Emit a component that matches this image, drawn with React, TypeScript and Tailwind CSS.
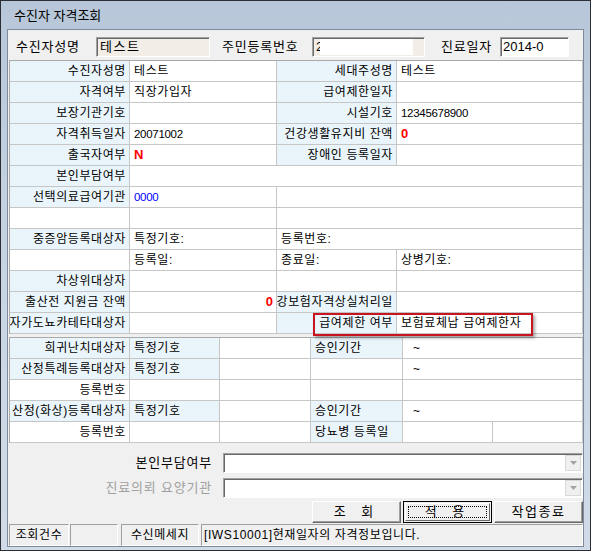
import type { ReactNode } from "react";

const font = "font-['Liberation_Sans','Noto_Sans_CJK_KR',sans-serif]";

function L({ children, span = "", white = false }: { children?: ReactNode; span?: string; white?: boolean }) {
  return (
    <div
      className={`h-[21px] border-r border-b border-[#c6c6c6] flex items-center justify-end overflow-hidden whitespace-nowrap pr-[3px] text-[12px] tracking-[0.6px] text-black ${white ? "bg-white" : "bg-[#eaf5fb]"} ${span}`}
    >
      <span className="shrink-0">{children}</span>
    </div>
  );
}

function V({ children, span = "", right = false, blue = false }: { children?: ReactNode; span?: string; right?: boolean; blue?: boolean }) {
  return (
    <div
      className={`h-[21px] border-r border-b border-[#c6c6c6] flex items-center overflow-hidden whitespace-nowrap text-[12px] tracking-[0.6px] text-black ${blue ? "bg-[#eaf5fb]" : "bg-white"} ${right ? "justify-end pr-[3px]" : "pl-[4px]"} ${span}`}
    >
      <span className="shrink-0">{children}</span>
    </div>
  );
}

const Red = ({ children }: { children: ReactNode }) => (
  <span className="text-[#ff0000] font-bold text-[13px] tracking-normal">{children}</span>
);

const Num = ({ children }: { children: ReactNode }) => (
  <span className="text-[11.5px] tracking-[-0.3px]">{children}</span>
);

function Combo() {
  return (
    <div className="w-[360px] h-[20px] bg-white border border-t-[#a0a0a0] border-l-[#a0a0a0] border-b-white border-r-white shadow-[inset_1px_1px_0_#696969] flex justify-end p-[1px]">
      <div className="w-[16px] h-full bg-[#f0f0f0] border border-[#d9d9d9] flex items-center justify-center">
        <svg width="7" height="4" viewBox="0 0 7 4">
          <path d="M0 0h7L3.5 4z" fill="#a3a3a3" />
        </svg>
      </div>
    </div>
  );
}

export default function App() {
  return (
    <div className={`w-[591px] h-[551px] bg-[#2b2e34] p-px flex ${font}`}>
      <div className="flex-1 flex flex-col bg-gradient-to-b from-[#b7c7d9] via-[#c8d5e3] to-[#d0dbe7] px-[6px] pb-[3px]">
        <div className="h-[28px] flex items-center pl-[7px] pt-px text-[13px] text-black">수진자 자격조회</div>
        <div className="flex-1 border border-[#7d8a9c] bg-[#f0f0f0] flex flex-col">
          {/* top row */}
          <div className="flex items-center h-[20px] mt-[7px] text-[13px] tracking-[0.8px] text-black">
            <span className="ml-[8px] w-[80px]">수진자성명</span>
            <div className="w-[114px] h-[20px] bg-[#f2ede6] border border-t-[#a0a0a0] border-l-[#a0a0a0] border-b-white border-r-white shadow-[inset_1px_1px_0_#696969] flex items-center pl-[3px] text-[13px] tracking-[1.5px]">
              테스트
            </div>
            <span className="ml-[12px] w-[90px]">주민등록번호</span>
            <div className="w-[113px] h-[20px] bg-[#f2ede6] border border-t-[#a0a0a0] border-l-[#a0a0a0] border-b-white border-r-white shadow-[inset_1px_1px_0_#696969] flex items-center pl-[3px] overflow-hidden">
              <span className="w-[4px] overflow-hidden">2</span>
              <div className="w-[93px] h-[16px] bg-white" />
            </div>
            <span className="ml-[16px] w-[59px]">진료일자</span>
            <div className="w-[69px] h-[20px] bg-white border border-t-[#a0a0a0] border-l-[#a0a0a0] border-b-white border-r-white shadow-[inset_1px_1px_0_#696969] flex items-center pl-[2px] overflow-hidden whitespace-nowrap text-[13px] tracking-normal">
              <span className="w-[58px] overflow-hidden shrink-0">2014-0</span>
            </div>
          </div>

          {/* table 1 */}
          <div className="relative ml-[1px] w-[574px] mt-[3px] border-l border-t border-[#a9a9a9] grid grid-cols-[120px_147px_120px_1fr]">
            <L>수진자성명</L>
            <V>테스트</V>
            <L>세대주성명</L>
            <V>테스트</V>

            <L>자격여부</L>
            <V>직장가입자</V>
            <L>급여제한일자</L>
            <V />

            <L>보장기관기호</L>
            <V />
            <L>시설기호</L>
            <V>
              <Num>12345678900</Num>
            </V>

            <L>자격취득일자</L>
            <V>
              <Num>20071002</Num>
            </V>
            <L>건강생활유지비 잔액</L>
            <V>
              <Red>0</Red>
            </V>

            <L>출국자여부</L>
            <V>
              <Red>N</Red>
            </V>
            <L>장애인 등록일자</L>
            <V />

            <L>본인부담여부</L>
            <V span="col-span-3" />

            <L>선택의료급여기관</L>
            <V>
              <span className="text-[#0000ff]">
                <Num>0000</Num>
              </span>
            </V>
            <V span="col-span-2" />

            <L white />
            <V />
            <V span="col-span-2" />

            <L>중증암등록대상자</L>
            <V>특정기호:</V>
            <V span="col-span-2">등록번호:</V>

            <L white />
            <V>등록일:</V>
            <V>종료일:</V>
            <V>상병기호:</V>

            <L>차상위대상자</L>
            <V />
            <V />
            <V />

            <L>출산전 지원금 잔액</L>
            <V right>
              <Red>0</Red>
            </V>
            <L>건강보험자격상실처리일</L>
            <V />

            <L>자가도뇨카테타대상자</L>
            <V />
            <L>급여제한 여부</L>
            <V>보험료체납 급여제한자</V>

            <div className="absolute left-[303px] top-[252px] w-[220px] h-[23px] border-2 border-[#c8141e] shadow-[2px_2px_3px_rgba(0,0,0,0.35)] pointer-events-none" />
          </div>

          {/* table 2 */}
          <div className="ml-[1px] w-[574px] mt-[3px] border-l border-t border-[#a9a9a9] grid grid-cols-[120px_90px_91px_92px_90px_1fr]">
            <L>희귀난치대상자</L>
            <V blue>특정기호</V>
            <V />
            <V blue>승인기간</V>
            <V span="col-span-2">
              <span className="pl-[6px]">~</span>
            </V>

            <L>산정특례등록대상자</L>
            <V blue>특정기호</V>
            <V />
            <V />
            <V span="col-span-2">
              <span className="pl-[6px]">~</span>
            </V>

            <L white>등록번호</L>
            <V />
            <V />
            <V />
            <V span="col-span-2" />

            <L>산정(화상)등록대상자</L>
            <V blue>특정기호</V>
            <V />
            <V blue>승인기간</V>
            <V span="col-span-2">
              <span className="pl-[6px]">~</span>
            </V>

            <L white>등록번호</L>
            <V />
            <V />
            <V blue>당뇨병 등록일</V>
            <V />
            <V />
          </div>

          {/* bottom fields */}
          <div className="flex items-center mt-[10px] h-[20px]">
            <span className="w-[215px] pr-[11px] text-right text-[13px] tracking-[0.8px] text-black">본인부담여부</span>
            <Combo />
          </div>
          <div className="flex items-center mt-[5px] h-[20px]">
            <span className="w-[215px] pr-[11px] text-right text-[13px] tracking-[0.8px] text-[#a0a0a0]">진료의뢰 요양기관</span>
            <Combo />
          </div>

          {/* buttons */}
          <div className="flex mt-[3px] h-[22px] text-[13px] text-black">
            <button className="ml-[304px] w-[89px] h-full bg-[#f0f0f0] border border-t-white border-l-white border-b-[#696969] border-r-[#696969] shadow-[inset_-1px_-1px_0_#a0a0a0] tracking-[6px]">
              조 회
            </button>
            <button className="ml-[2px] w-[89px] h-full bg-[#f0f0f0] border border-black p-px">
              <div className="w-full h-full border border-t-white border-l-white border-b-[#696969] border-r-[#696969] p-[2px]">
                <div className="w-full h-full border border-dotted border-black flex items-center justify-center tracking-[6px]">
                  적 용
                </div>
              </div>
            </button>
            <button className="ml-[2px] flex-1 h-full bg-[#f0f0f0] border border-t-white border-l-white border-b-[#696969] border-r-[#696969] shadow-[inset_-1px_-1px_0_#a0a0a0] tracking-[1.5px]">
              작업종료
            </button>
          </div>

          {/* status bar */}
          <div className="flex mt-[1px] h-[22px] text-[12px] tracking-[0.6px] text-black">
            <div className="ml-[1px] w-[60px] border border-t-[#a0a0a0] border-l-[#a0a0a0] border-b-white border-r-white flex items-center justify-center">
              조회건수
            </div>
            <div className="ml-[1px] w-[48px] border border-t-[#a0a0a0] border-l-[#a0a0a0] border-b-white border-r-white" />
            <div className="ml-[3px] w-[78px] border border-t-[#a0a0a0] border-l-[#a0a0a0] border-b-white border-r-white flex items-center justify-center">
              수신메세지
            </div>
            <div className="ml-[2px] flex-1 border border-t-[#a0a0a0] border-l-[#a0a0a0] border-b-white border-r-white flex items-center pl-[2px] whitespace-nowrap overflow-hidden">
              [IWS10001]현재일자의 자격정보입니다.
            </div>
          </div>
        </div>
      </div>
    </div>
  );
}
